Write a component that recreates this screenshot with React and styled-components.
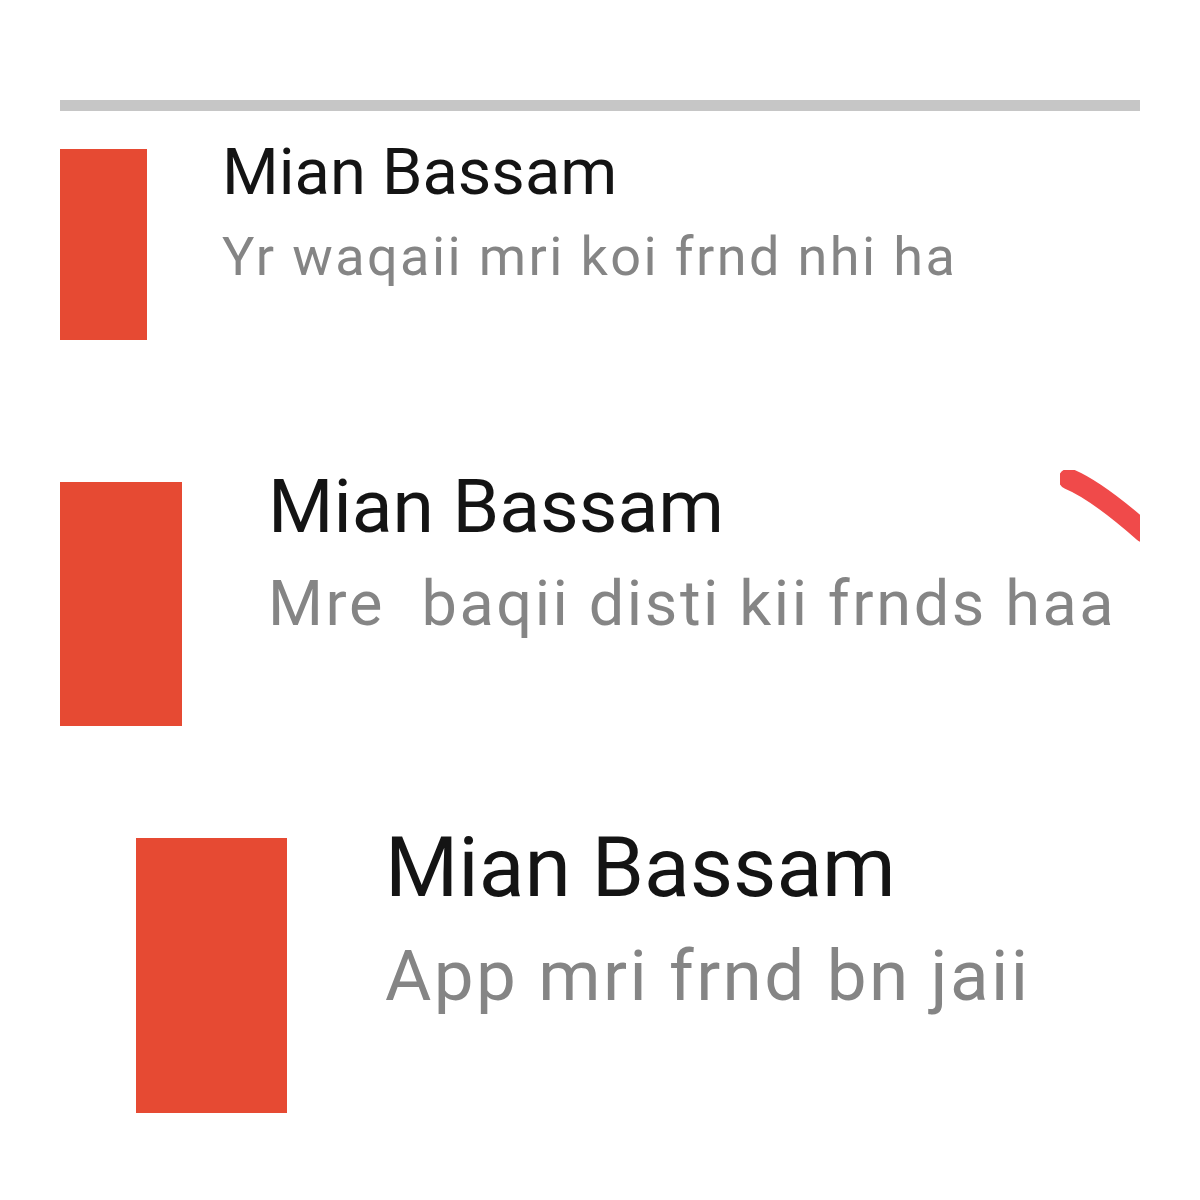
import React from "react";
import styled, { createGlobalStyle } from "styled-components";

const Global = createGlobalStyle`
  html, body { margin: 0; padding: 0; background: #ffffff; }
  body { font-family: Roboto, "Noto Sans", "Liberation Sans", sans-serif; }
`;

const Page = styled.div`
  width: 1200px;
  height: 1200px;
  box-sizing: border-box;
  padding: 100px 60px 0 60px;
  display: flex;
  flex-direction: column;
  background: #ffffff;
  overflow: hidden;
`;

const Divider = styled.div`
  height: 11px;
  background: #c6c6c6;
`;

const Row = styled.div`
  position: relative;
  display: flex;
  align-items: flex-start;
  gap: ${(p) => p.$gap}px;
  margin-top: ${(p) => p.$top}px;
  margin-left: ${(p) => p.$indent}px;
`;

const Avatar = styled.div`
  flex: none;
  width: ${(p) => p.$w}px;
  height: ${(p) => p.$h}px;
  background: #e64a33;
`;

const TextCol = styled.div`
  display: flex;
  flex-direction: column;
  min-width: 0;
`;

/* line-height chosen so the name's baseline sits $base px below the row top */
const nameLine = (size, base) => 2 * (base - 0.928 * size) + 1.172 * size;

const Name = styled.div`
  font-size: ${(p) => p.$size}px;
  line-height: ${(p) => nameLine(p.$size, p.$base)}px;
  color: #141414;
  white-space: pre;
`;

const Preview = styled.div`
  font-size: ${(p) => p.$size}px;
  line-height: normal;
  letter-spacing: ${(p) => p.$track}px;
  color: #858585;
  white-space: pre;
  margin-top: ${(p) => p.$base - nameLine(p.$nameSize, p.$nameBase) - 0.928 * p.$size}px;
`;

const Scribble = styled.svg`
  position: absolute;
  right: 0;
  top: -12px;
  width: 80px;
  height: 80px;
  overflow: hidden;
`;

const chats = [
  {
    indent: 0, top: 38, avW: 87, avH: 191, gap: 75,
    name: 65, nameBase: 46, sub: 54, subBase: 126, track: 2.4,
    text: "Yr waqaii mri koi frnd nhi ha",
  },
  {
    indent: 0, top: 142, avW: 122, avH: 244, gap: 86,
    name: 75, nameBase: 50, sub: 63, subBase: 143, track: 2.6,
    text: "Mre  baqii disti kii frnds haa", mark: true,
  },
  {
    indent: 76, top: 112, avW: 151, avH: 275, gap: 98,
    name: 84, nameBase: 59, sub: 71, subBase: 162, track: 2.4,
    text: "App mri frnd bn jaii",
  },
];

export default function App() {
  return (
    <>
      <Global />
      <Page>
        <Divider />
        {chats.map((c, i) => (
          <Row key={i} $gap={c.gap} $top={c.top} $indent={c.indent}>
            <Avatar $w={c.avW} $h={c.avH} />
            <TextCol>
              <Name $size={c.name} $base={c.nameBase}>Mian Bassam</Name>
              <Preview
                $size={c.sub}
                $base={c.subBase}
                $nameSize={c.name}
                $nameBase={c.nameBase}
                $track={c.track}
              >
                {c.text}
              </Preview>
            </TextCol>
            {c.mark && (
              <Scribble viewBox="0 0 80 80">
                <path
                  d="M 9 9 Q 36 20 84 62"
                  fill="none"
                  stroke="#f04a4a"
                  strokeWidth="21"
                  strokeLinecap="round"
                />
              </Scribble>
            )}
          </Row>
        ))}
      </Page>
    </>
  );
}
